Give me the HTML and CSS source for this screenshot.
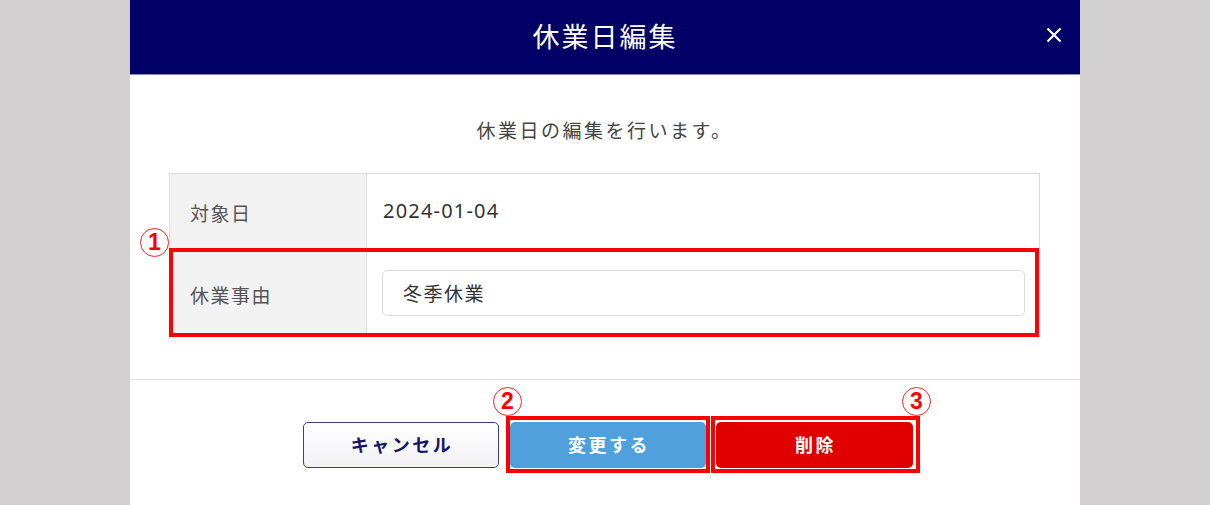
FILE: index.html
```html
<!DOCTYPE html>
<html lang="ja">
<head>
<meta charset="utf-8">
<title>休業日編集</title>
<link rel="stylesheet" href="styles.css">
</head>
<body>
<div class="modal">
  <header class="modal-header">
    <h1 class="modal-title">休業日編集</h1>
    <button class="close-btn" aria-label="閉じる">
      <svg width="16" height="16" viewBox="0 0 16 16"><path d="M1.5 1.5 L14.5 14.5 M14.5 1.5 L1.5 14.5" stroke="#fff" stroke-width="2.2" fill="none"/></svg>
    </button>
  </header>
  <section class="modal-body">
    <p class="lead">休業日の編集を行います。</p>
    <div class="form-table">
      <div class="row row-first">
        <div class="label">対象日</div>
        <div class="value date">2024-01-04</div>
      </div>
      <div class="row row-second">
        <div class="label">休業事由</div>
        <div class="value"><input class="text-input" type="text" value="冬季休業"></div>
      </div>
      <div class="mark mark-row"><span class="num num-1">1</span></div>
    </div>
  </section>
  <footer class="modal-footer">
    <button class="btn btn-cancel">キャンセル</button>
    <span class="hl hl-change"><button class="btn btn-change">変更する</button><span class="num num-2">2</span></span>
    <span class="hl hl-delete"><button class="btn btn-delete">削除</button><span class="num num-3">3</span></span>
  </footer>
</div>
</body>
</html>
```
FILE: styles.css
```css
* { box-sizing: border-box; }
html, body { margin: 0; padding: 0; }
body {
  background: #d2d0d1;
  width: 1210px;
  height: 505px;
  overflow: hidden;
  display: flex;
  justify-content: center;
  font-family: "Noto Sans", "Noto Sans CJK JP", sans-serif;
}
.modal {
  width: 950px;
  height: 505px;
  background: #fff;
  display: flex;
  flex-direction: column;
}
.modal-header {
  position: relative;
  height: 75px;
  background: #000066;
  border-bottom: 1px solid #8a8ac4;
  display: flex;
  align-items: center;
  justify-content: center;
}
.modal-title {
  margin: 0;
  color: #fff;
  font-family: "Noto Sans CJK JP", sans-serif;
  font-weight: 400;
  font-size: 27px;
  letter-spacing: 2px;
  line-height: 1;
  padding-bottom: 4px;
}
.close-btn {
  position: absolute;
  right: 18px;
  top: 27px;
  width: 16px;
  height: 16px;
  padding: 0;
  border: 0;
  background: transparent;
  display: flex;
}
.modal-body {
  padding: 40px 40px 42px 39px;
  border-bottom: 1px solid #e2e2e2;
}
.lead {
  margin: 0 0 28px;
  text-align: center;
  font-family: "Noto Sans CJK JP", sans-serif;
  font-size: 19px;
  letter-spacing: 2.5px;
  line-height: 30px;
  color: #444;
}
.form-table {
  position: relative;
  border: 1px solid #dcdcdc;
}
.row {
  display: grid;
  grid-template-columns: 197px 1fr;
}
.row-first { height: 76px; border-bottom: 1px solid #dcdcdc; }
.row-second { height: 86px; }
.label {
  background: #f2f2f2;
  border-right: 1px solid #dcdcdc;
  display: flex;
  align-items: center;
  padding-left: 20px;
  font-family: "Noto Sans CJK JP", sans-serif;
  font-size: 19px;
  letter-spacing: 1.5px;
  color: #555;
  padding-top: 2px;
}
.value {
  display: flex;
  align-items: center;
  padding: 0 14px 0 15px;
  color: #333;
}
.date {
  padding-left: 16px;
  padding-bottom: 2px;
  font-size: 20px;
  letter-spacing: 1.2px;
}
.text-input {
  width: 100%;
  height: 46px;
  border: 1px solid #dcdcdc;
  border-radius: 5px;
  padding: 0 0 2px 20px;
  font-family: "Noto Sans CJK JP", sans-serif;
  font-size: 19px;
  letter-spacing: 1.5px;
  color: #333;
  background: #fff;
  outline: none;
}
.mark-row {
  position: absolute;
  left: -1px;
  right: 0;
  top: 74px;
  bottom: -1px;
  border: 4px solid #ff0000;
  pointer-events: none;
}
.num {
  position: absolute;
  width: 29px;
  height: 29px;
  border: 1px solid #ff2020;
  border-radius: 50%;
  display: flex;
  align-items: center;
  justify-content: center;
  color: #ff0000;
  font-family: "Liberation Sans", sans-serif;
  font-weight: 700;
  font-size: 23px;
  line-height: 1;
  background: #fff;
}
.num-1 { left: -33px; top: -24px; }
.modal-footer {
  display: flex;
  align-items: flex-start;
  justify-content: center;
  padding: 36px 0 0 13px;
}
.btn {
  width: 196px;
  height: 46px;
  border-radius: 5px;
  font-family: "Noto Sans CJK JP", sans-serif;
  font-weight: 700;
  font-size: 18px;
  letter-spacing: 2.5px;
  padding: 0 0 2px 2px;
  cursor: pointer;
}
.btn-cancel {
  margin-top: 6px;
  margin-right: 7px;
  border: 1px solid #3b3b8e;
  background: linear-gradient(#ffffff, #f1f1f4);
  color: #15156a;
}
.hl {
  position: relative;
  display: flex;
  border: 4px solid #ff0000;
  padding: 2px 0 1px;
}
.hl-change { margin-right: 1px; }
.hl-delete { padding: 2px 3px 1px 1px; }
.btn-change {
  border: 0;
  background: #4fa0dd;
  color: #fff;
}
.btn-delete {
  width: 197px;
  border: 0;
  background: #e00000;
  color: #fff;
}
.num-2 { left: -17px; top: -33px; }
.num-3 { left: 187px; top: -33px; }
```
